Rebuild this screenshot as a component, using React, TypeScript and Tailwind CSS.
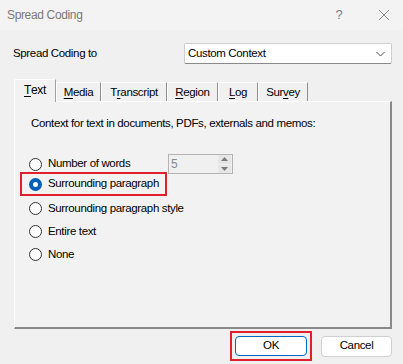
import React from "react";

const font = { fontFamily: '"Liberation Sans", Arial, sans-serif' };

interface TabProps {
  label: string;
  mnemonic: number;
  width: string;
  selected?: boolean;
}

const Tab = ({ label, mnemonic, width, selected }: TabProps) => {
  const text = (
    <>
      {label.slice(0, mnemonic)}
      <span className="underline underline-offset-2">{label[mnemonic]}</span>
      {label.slice(mnemonic + 1)}
    </>
  );
  if (selected) {
    return (
      <div
        className={`${width} relative z-10 h-[23px] -mb-px flex items-center justify-center border-l border-t border-white border-r border-r-[#a0a0a0] bg-[#f2f2f2] rounded-tl-[2px] pb-[2px] text-[12px]`}
      >
        {text}
      </div>
    );
  }
  return (
    <div
      className={`${width} mt-[3px] h-[19px] flex items-center justify-center border-l border-t border-white border-r border-r-[#8e8e8e] bg-[#f0f0f0] pt-[1px]`}
    >
      {text}
    </div>
  );
};

interface RadioProps {
  label: string;
  checked?: boolean;
}

const Radio = ({ label, checked }: RadioProps) => (
  <div className="flex items-center gap-[6px] h-[23px] whitespace-nowrap">
    {checked ? (
      <span className="w-[13px] h-[13px] rounded-full bg-[#005fb8] flex items-center justify-center">
        <span className="w-[5px] h-[5px] rounded-full bg-white" />
      </span>
    ) : (
      <span className="w-[13px] h-[13px] rounded-full border border-[#333333] bg-white" />
    )}
    <span>{label}</span>
  </div>
);

export default function App() {
  return (
    <div
      className="w-[403px] h-[364px] bg-[#f0f0f0] text-[11.5px] tracking-[-0.35px] text-black flex flex-col overflow-hidden"
      style={font}
    >
      <div className="h-[30px] bg-[#f3f3f3] flex items-center pl-[7px] text-[#7a7a7a] text-[12px]">
        <span className="flex-1">Spread Coding</span>
        <span className="w-[14px] text-center mr-[32px] text-[13px]">?</span>
        <svg width="12" height="12" viewBox="0 0 12 12" className="mr-[13px]">
          <path d="M1 1 L11 11 M11 1 L1 11" stroke="#8a8a8a" strokeWidth="1" />
        </svg>
      </div>

      <div className="mt-[13px] flex items-center pl-[13px] pr-[11px]">
        <span className="flex-1">Spread Coding to</span>
        <div className="w-[208px] h-[21px] bg-white border border-[#cfcfcf] border-b-[#8a8a8a] rounded-[2px] flex items-center pl-[3px] pr-[6px]">
          <span className="flex-1">Custom Context</span>
          <svg width="9" height="6" viewBox="0 0 9 6">
            <path d="M0.5 1 L4.5 5 L8.5 1" stroke="#555" strokeWidth="1" fill="none" />
          </svg>
        </div>
      </div>

      <div className="mt-[15px] ml-[14px] mr-[11px] flex flex-col">
        <div className="flex items-start h-[22px]">
          <Tab label="Text" mnemonic={0} width="w-[42px]" selected />
          <Tab label="Media" mnemonic={0} width="w-[45px]" />
          <Tab label="Transcript" mnemonic={1} width="w-[66px]" />
          <Tab label="Region" mnemonic={0} width="w-[51px]" />
          <Tab label="Log" mnemonic={0} width="w-[40px]" />
          <Tab label="Survey" mnemonic={3} width="w-[50px]" />
        </div>
        <div className="h-[228px] bg-[#f2f2f2] border-l border-t border-white border-r-2 border-b-2 border-r-[#8a8a8a] border-b-[#8a8a8a] pl-[16px] pt-[13px]">
          <div className="h-[16px] leading-[16px] whitespace-nowrap">
            Context for text in documents, PDFs, externals and memos:
          </div>
          <div className="mt-[23px] -ml-[2px] flex flex-col">
            <div className="flex items-center h-[20px]">
              <div className="w-[139px]">
                <Radio label="Number of words" />
              </div>
              <div className="w-[65px] h-[20px] border border-[#b4b4b4] bg-[#f0f0f0] flex items-center">
                <span className="flex-1 pl-[2px] text-[#8a8a8a] text-[12px]">5</span>
                <div className="w-[13px] h-[18px] flex flex-col gap-px mr-px">
                  <div className="flex-1 bg-[#e6e6e6] flex items-center justify-center">
                    <svg width="7" height="4" viewBox="0 0 7 4">
                      <path d="M0 4 L3.5 0 L7 4 Z" fill="#7a7a7a" />
                    </svg>
                  </div>
                  <div className="flex-1 bg-[#e6e6e6] flex items-center justify-center">
                    <svg width="7" height="4" viewBox="0 0 7 4">
                      <path d="M0 0 L3.5 4 L7 0 Z" fill="#7a7a7a" />
                    </svg>
                  </div>
                </div>
              </div>
            </div>
            <div className="-mt-[2px] -ml-[9px] w-[147px] border-2 border-[#e0202a] pl-[7px] h-[24px] flex items-center">
              <Radio label="Surrounding paragraph" checked />
            </div>
            <div className="mt-px">
              <Radio label="Surrounding paragraph style" />
              <Radio label="Entire text" />
              <Radio label="None" />
            </div>
          </div>
        </div>
      </div>

      <div className="mt-[2px] flex justify-end pr-[11px] items-center">
        <div className="border-2 border-[#e0202a] p-[3px]">
          <button className="w-[72px] h-[20px] bg-white border border-[#0067c0] rounded-[4px] flex items-center justify-center">
            OK
          </button>
        </div>
        <button className="ml-[9px] w-[71px] h-[21px] bg-white border border-[#d0d0d0] rounded-[4px] flex items-center justify-center">
          Cancel
        </button>
      </div>
    </div>
  );
}
